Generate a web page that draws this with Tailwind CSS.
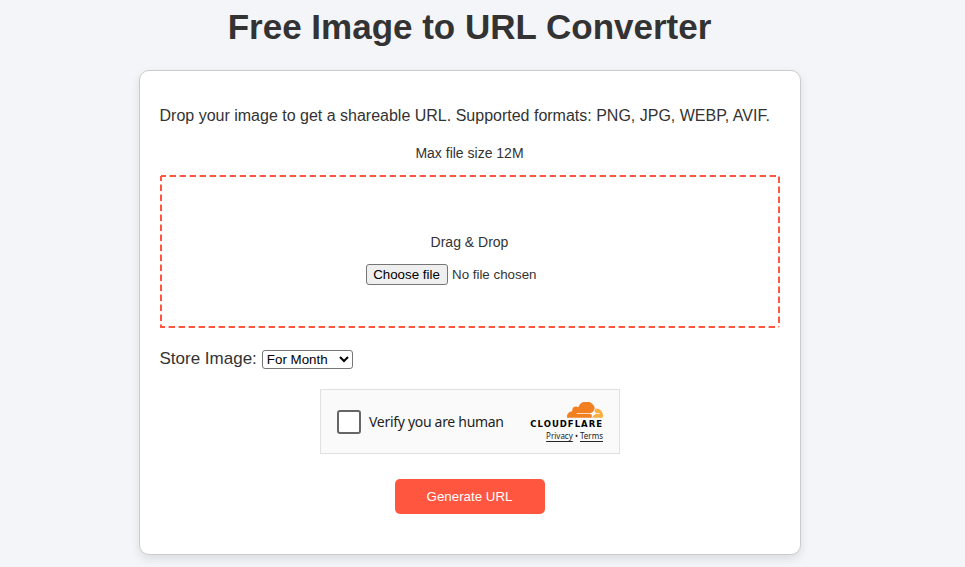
<!DOCTYPE html>
<html lang="en">
<head>
  <meta charset="UTF-8">
  <meta name="viewport" content="width=device-width, initial-scale=1.0">
  <title>Free Image to URL Converter</title>
  <script src="https://cdn.jsdelivr.net/npm/@tailwindcss/browser@4"></script>
</head>
<body class="bg-[#f4f5f9] text-[#333] font-['Liberation_Sans',Arial,sans-serif] h-[567px] overflow-hidden pr-[26px]">
  <h1 class="text-center text-[35px] leading-[41px] font-bold pt-[6px] mb-[23px]">Free Image to URL Converter</h1>
  <div class="w-[662px] h-[485px] mx-auto bg-white border border-[#ccc] rounded-[10px] shadow-[0_4px_10px_rgba(0,0,0,0.1)] px-5 pt-[36px]">
    <p class="text-[16px] leading-[18px] whitespace-nowrap">Drop your image to get a shareable URL. Supported formats: PNG, JPG, WEBP, AVIF.</p>
    <p class="text-[14px] leading-4 text-center mt-[20px]">Max file size 12M</p>
    <div class="relative h-[153px] mt-[14px] flex flex-col items-center pt-[59px]">
      <svg class="absolute left-[0.5px] top-0 w-[620px] h-[153px]" viewBox="0 0 620 153" fill="none" stroke="#ff5640" stroke-width="2" stroke-dasharray="6.4 3.6" stroke-dashoffset="1.4">
        <path d="M1 1H619V152"/>
        <path d="M1 1V152H619"/>
      </svg>
      <p class="text-[14px] leading-4">Drag &amp; Drop</p>
      <div class="flex items-center w-[208px] mt-[14px] text-[13.33px]">
        <button class="h-[21px] w-[82px] border border-[#767676] rounded-[3px] bg-[#efefef] text-black">Choose file</button>
        <span class="ml-[4.5px]">No file chosen</span>
      </div>
    </div>
    <div class="flex items-center mt-[21px] h-5">
      <label class="text-[17px] mr-[5px]">Store Image:</label>
      <select class="w-[91px] h-[19px] border border-[#767676] rounded-[3px] bg-white text-black text-[13.33px] appearance-auto">
        <option>For Month</option>
      </select>
    </div>
    <div class="w-[300px] h-[65px] mx-auto mt-[20px] bg-[#fafafa] border border-[#e0e0e0] flex items-center font-['Noto_Sans',sans-serif] relative">
      <span class="w-6 h-6 ml-4 border-2 border-[#666] rounded-[3px] bg-white"></span>
      <span class="ml-[8.5px] text-[14px] tracking-[-0.3px] text-[#232323]">Verify you are human</span>
      <div class="absolute right-[15.5px] top-[12px] flex flex-col items-end">
        <svg viewBox="0 7 24 10.600" class="w-[36px] h-4">
          <path fill="#f38020" d="M16.5088 16.8447c.1475-.5068.0908-.9707-.1553-1.3154-.2246-.3164-.6045-.499-1.0615-.5205l-8.6592-.1123a.1559.1559 0 0 1-.1333-.0713c-.0283-.042-.0351-.0986-.021-.1553.0278-.084.1123-.1484.2036-.1562l8.7359-.1123c1.0351-.0489 2.1601-.8868 2.5537-1.9136l.499-1.3013c.0215-.0561.0293-.1128.0147-.168-.5625-2.5463-2.835-4.4453-5.5499-4.4453-2.5039 0-4.6284 1.6177-5.3876 3.8614-.4927-.3658-1.1187-.5625-1.794-.499-1.2026.119-2.1665 1.083-2.2861 2.2856-.0283.31-.0069.6128.0635.894C1.5683 13.171 0 14.7754 0 16.752c0 .1748.0142.3515.0352.5273.0141.083.0844.1475.1689.1475h15.9814c.0909 0 .1758-.0645.2032-.1553l.12-.4268z"/>
          <path fill="#faae40" d="M19.2656 11.2813c-.0771 0-.1611 0-.2383.0112-.0566 0-.1054.0415-.127.0976l-.3378 1.1744c-.1475.5068-.0918.9707.1543 1.3164.2256.3164.6055.498 1.0625.5195l1.8437.1133c.0557 0 .1055.0263.1329.0703.0283.043.0351.1074.0214.1562-.0283.084-.1132.1485-.204.1553l-1.921.1123c-1.041.0488-2.1582.8867-2.5527 1.914l-.1406.3585c-.0283.0713.0215.1416.0986.1416h6.5977c.0771 0 .1474-.0489.169-.126.1122-.4082.1757-.837.1757-1.2803 0-2.6025-2.125-4.727-4.7344-4.727z"/>
        </svg>
        <span class="text-[8.500px] leading-[6px] mt-[3px] font-bold tracking-[1px] font-['DejaVu_Sans',sans-serif] text-black whitespace-nowrap">CLOUDFLARE</span>
        <span class="text-[8px] leading-[8px] mt-[5px] text-[#232323] whitespace-nowrap"><a class="underline underline-offset-2" href="#">Privacy</a> • <a class="underline underline-offset-2" href="#">Terms</a></span>
      </div>
    </div>
    <button class="block w-[150px] h-[35px] mx-auto mt-[25px] rounded-[5px] bg-[#ff5640] text-white text-[13.33px]">Generate URL</button>
  </div>
</body>
</html>
